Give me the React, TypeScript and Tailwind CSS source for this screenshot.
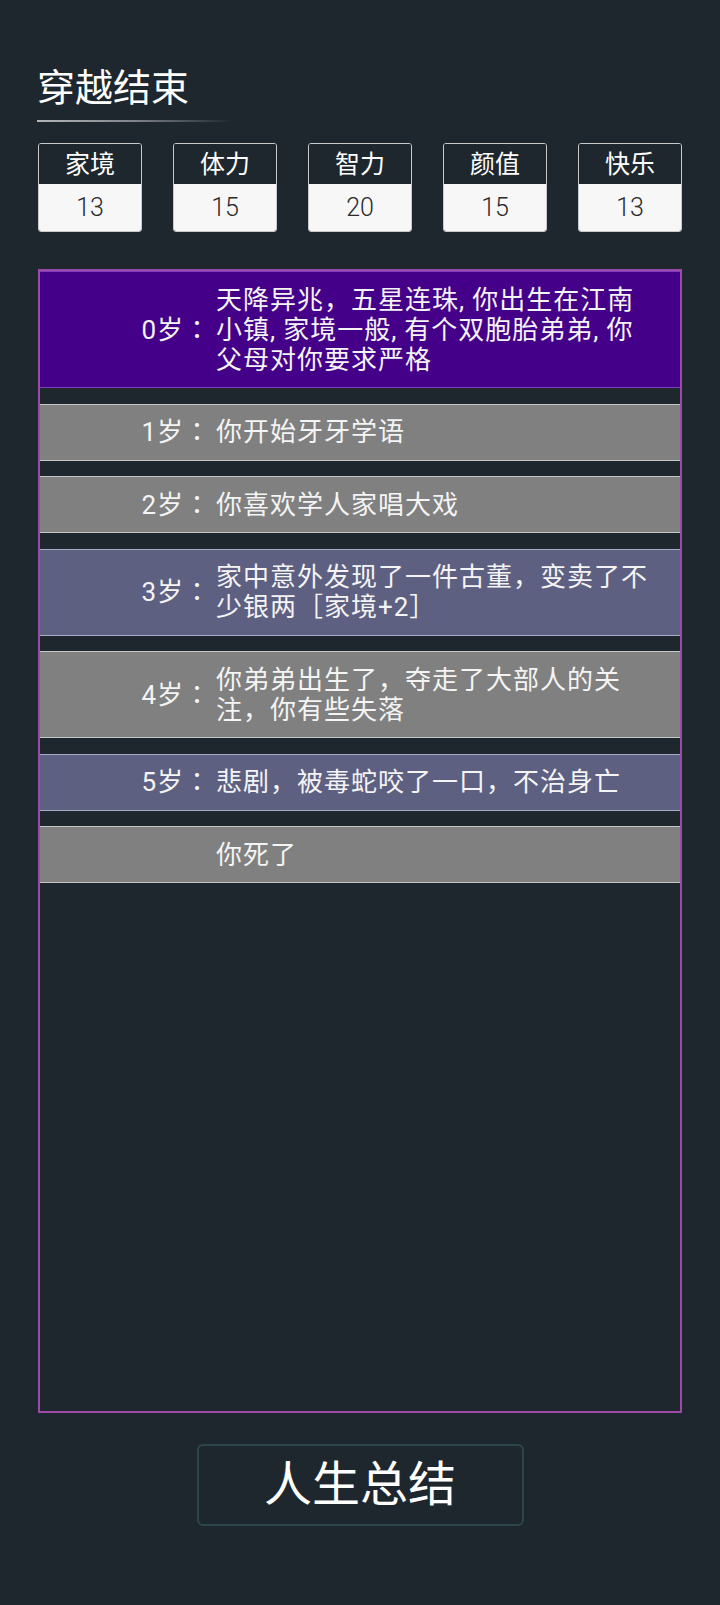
import React from 'react';

type Tone = 'purple' | 'gray' | 'slate';

const stats = [
  { label: '家境', value: 13 },
  { label: '体力', value: 15 },
  { label: '智力', value: 20 },
  { label: '颜值', value: 15 },
  { label: '快乐', value: 13 },
];

const events: { age: string; lines: string[]; tone: Tone }[] = [
  { age: '0岁：', lines: ['天降异兆，五星连珠,你出生在江南', '小镇,家境一般,有个双胞胎弟弟,你', '父母对你要求严格'], tone: 'purple' },
  { age: '1岁：', lines: ['你开始牙牙学语'], tone: 'gray' },
  { age: '2岁：', lines: ['你喜欢学人家唱大戏'], tone: 'gray' },
  { age: '3岁：', lines: ['家中意外发现了一件古董，变卖了不', '少银两［家境+2］'], tone: 'slate' },
  { age: '4岁：', lines: ['你弟弟出生了，夺走了大部人的关', '注，你有些失落'], tone: 'gray' },
  { age: '5岁：', lines: ['悲剧，被毒蛇咬了一口，不治身亡'], tone: 'slate' },
  { age: '', lines: ['你死了'], tone: 'gray' },
];

const toneClass: Record<Tone, string> = {
  purple: 'bg-[#440088] border-[#7d3fc0]',
  gray: 'bg-[#808080] border-[#c6c6c6]',
  slate: 'bg-[#5e6082] border-[#a9abc8]',
};

// 半角逗号在原图里后面带一点空隙
function Line({ text }: { text: string }) {
  const parts = text.split(',');
  return (
    <div className="whitespace-nowrap">
      {parts.map((p, i) => (
        <React.Fragment key={i}>
          {p}
          {i < parts.length - 1 && <span className="mr-[7px]">,</span>}
        </React.Fragment>
      ))}
    </div>
  );
}

export default function App() {
  return (
    <div
      className="min-h-[1605px] w-[720px] bg-[#1e272e] pt-[69px] text-white"
      style={{ fontFamily: 'Roboto, "Noto Sans CJK SC", sans-serif' }}
    >
      {/* 标题 */}
      <div className="pl-[37px]">
        <h1 className="text-[38px] leading-[38px] font-normal">穿越结束</h1>
        <div className="mt-[13px] h-[2px] w-[195px] bg-linear-to-r from-[#b4b6b8] via-[#80848a] to-transparent" />
      </div>

      {/* 属性 */}
      <div className="mt-[21px] flex gap-[31px] pl-[38px]">
        {stats.map((s) => (
          <div key={s.label} className="w-[104px] overflow-hidden rounded-[3px] border border-[#c9c9c9]">
            <div className="flex h-[40px] items-center justify-center bg-[#1e272e] text-[25px] leading-none text-white">
              {s.label}
            </div>
            <div className="flex h-[47px] items-center justify-center bg-[#f7f7f7] text-[25px] leading-none font-light text-[#2a2a2a]">
              {s.value}
            </div>
          </div>
        ))}
      </div>

      {/* 人生记录 */}
      <div className="mt-[37px] ml-[38px] h-[1144px] w-[644px] border-2 border-[#9b4aa8]">
        <div className="flex flex-col gap-[15.5px]">
          {events.map((e, i) => (
            <div
              key={i}
              className={`flex items-center border-y py-[12.5px] text-[26px] leading-[30px] tracking-[1px] text-[#f4f4f4] ${toneClass[e.tone]}`}
            >
              <div
                className="mr-[5px] w-[171px] shrink-0 text-right"
                style={{ fontFamily: 'Roboto, "Noto Sans CJK JP", sans-serif' }}
              >
                {e.age}
              </div>
              <div>
                {e.lines.map((l) => (
                  <Line key={l} text={l} />
                ))}
              </div>
            </div>
          ))}
        </div>
      </div>

      <div className="mt-[31px] flex justify-center">
        <button className="flex h-[82px] w-[327px] items-center justify-center rounded-[6px] border-2 border-[#2c464b] bg-[#1e272e] text-[48px] leading-none text-white">
          人生总结
        </button>
      </div>
    </div>
  );
}
